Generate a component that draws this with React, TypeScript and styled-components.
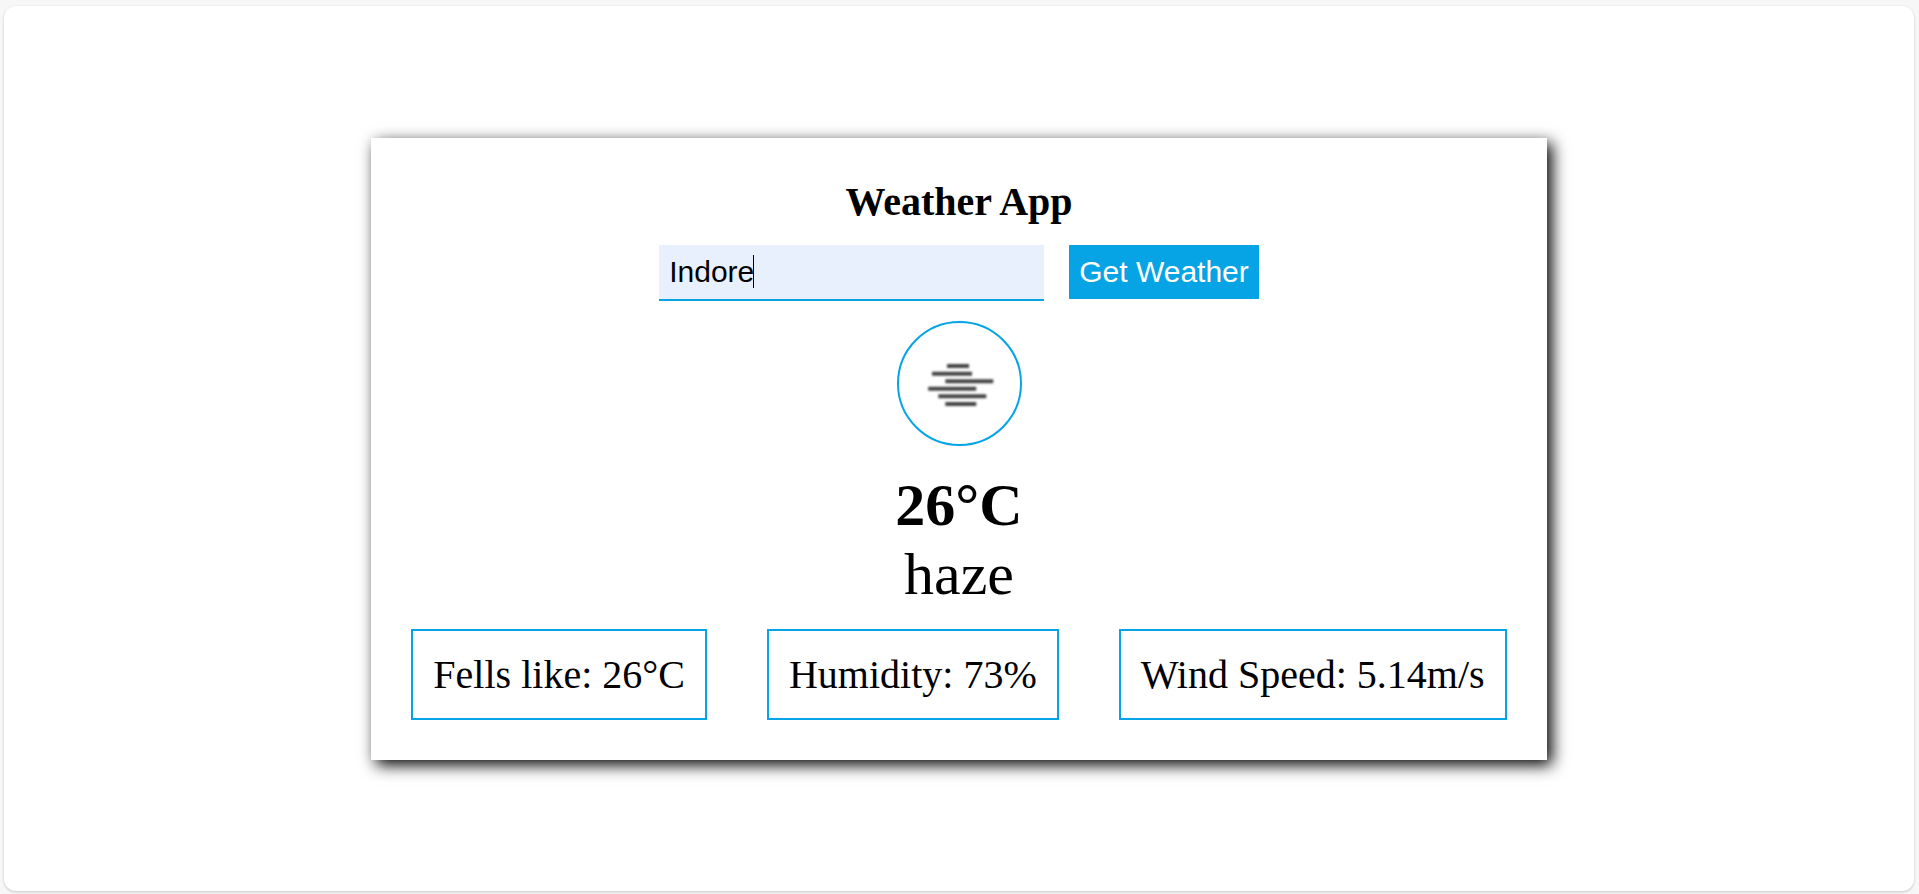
import React, { useState } from 'react';
import styled, { createGlobalStyle } from 'styled-components';

const accent = '#06a4e4';

const GlobalStyle = createGlobalStyle`
  * { box-sizing: border-box; }
  body {
    margin: 0;
    background: #f7f7f7;
    color: #000;
    font-family: 'Liberation Serif', 'Times New Roman', serif;
  }
`;

const Page = styled.div`
  display: flex;
  min-height: 100vh;
  padding: 6px 5px 3px 4px;
`;

const Frame = styled.main`
  display: flex;
  flex: 1;
  align-items: center;
  justify-content: center;
  padding: 20px;
  background: #fff;
  border-radius: 12px;
  box-shadow: 0 1px 3px rgba(0, 0, 0, 0.2);
`;

const Card = styled.section`
  display: flex;
  flex-direction: column;
  align-items: center;
  gap: 20px;
  padding: 40px;
  background: #fff;
  box-shadow: 5px 5px 15px #000;
`;

const Title = styled.h1`
  margin: 0;
  font-size: 40px;
  line-height: 47px;
`;

const SearchForm = styled.form`
  display: flex;
  align-items: flex-start;
  gap: 25px;
`;

const Field = styled.div`
  position: relative;
  display: flex;
`;

const CityInput = styled.input`
  width: 385px;
  height: 56px;
  padding: 10px;
  border: 0;
  border-bottom: 2px solid ${accent};
  border-radius: 0;
  outline: 0;
  background: #e8f0fe;
  color: #000;
  caret-color: transparent;
  font: 30px/34px 'Liberation Sans', Arial, sans-serif;
`;

const Caret = styled.span`
  position: absolute;
  top: 10px;
  left: 94px;
  width: 1px;
  height: 33px;
  background: #000;
`;

const SubmitButton = styled.button`
  padding: 10px;
  border: 0;
  background: ${accent};
  color: #fff;
  font: 30px/34px 'Liberation Sans', Arial, sans-serif;
`;

const IconRing = styled.div`
  display: flex;
  width: 125px;
  height: 125px;
  margin-bottom: 5px;
  border: 2px solid ${accent};
  border-radius: 50%;
`;

const Conditions = styled.div`
  font-size: 60px;
  line-height: 69px;
  text-align: center;
`;

const Temperature = styled.div`
  font-weight: bold;
`;

const Details = styled.div`
  display: flex;
  flex-wrap: wrap;
  justify-content: center;
  gap: 20px 60px;
`;

const Detail = styled.div`
  padding: 20px;
  border: 2px solid ${accent};
  font-size: 40px;
  line-height: 47px;
`;

const hazeBars = [
  { x: 48, y: 41, width: 22 },
  { x: 33, y: 48.7, width: 40 },
  { x: 46.3, y: 56.3, width: 48 },
  { x: 29.2, y: 63.8, width: 48 },
  { x: 39.3, y: 71.3, width: 48 },
  { x: 46.3, y: 78.9, width: 31 },
];

function HazeIcon() {
  return (
    <svg width="121" height="121" viewBox="0 0 121 121" role="img" aria-label="Haze">
      <defs>
        <filter id="soft" x="-20%" y="-100%" width="140%" height="300%">
          <feGaussianBlur stdDeviation="0.9" />
        </filter>
      </defs>
      {hazeBars.map((bar) => (
        <rect key={bar.y} {...bar} height="4" rx="0.5" fill="#444" filter="url(#soft)" />
      ))}
    </svg>
  );
}

const details = ['Fells like: 26°C', 'Humidity: 73%', 'Wind Speed: 5.14m/s'];

export default function App() {
  const [city, setCity] = useState('Indore');

  return (
    <>
      <GlobalStyle />
      <Page>
        <Frame>
          <Card>
            <Title>Weather App</Title>
            <SearchForm onSubmit={(event) => event.preventDefault()}>
              <Field>
                <CityInput
                  type="text"
                  aria-label="City"
                  value={city}
                  onChange={(event) => setCity(event.target.value)}
                />
                <Caret />
              </Field>
              <SubmitButton type="submit">Get Weather</SubmitButton>
            </SearchForm>
            <IconRing>
              <HazeIcon />
            </IconRing>
            <Conditions>
              <Temperature>26°C</Temperature>
              <div>haze</div>
            </Conditions>
            <Details>
              {details.map((detail) => (
                <Detail key={detail}>{detail}</Detail>
              ))}
            </Details>
          </Card>
        </Frame>
      </Page>
    </>
  );
}
